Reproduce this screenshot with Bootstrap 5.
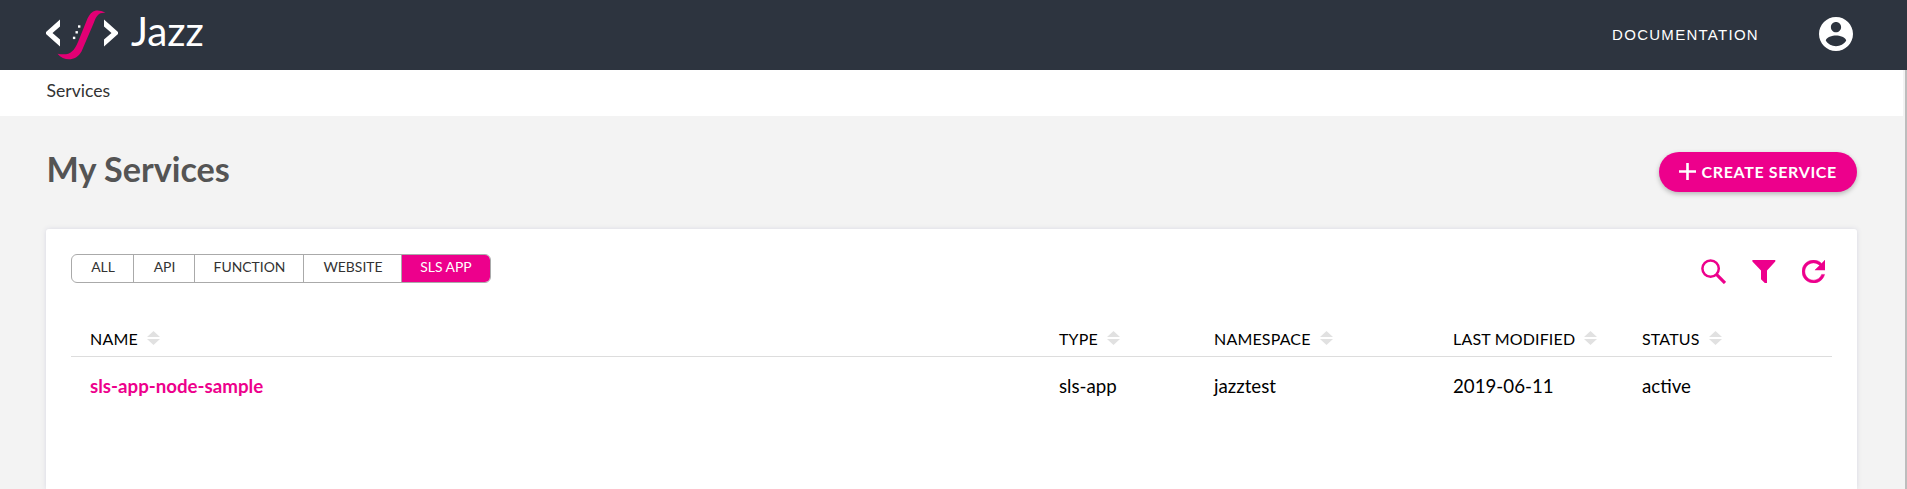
<!DOCTYPE html>
<html lang="en">
<head>
<meta charset="utf-8">
<meta name="viewport" content="width=device-width, initial-scale=1">
<title>Jazz - My Services</title>
<link rel="stylesheet" href="https://cdn.jsdelivr.net/npm/bootstrap@5.3.0/dist/css/bootstrap.min.css">
<style>
  :root { --pink: #ed008c; }
  body { font-family: Lato, sans-serif; background: #f3f3f3; color: #000; height: 489px; overflow: hidden; }
  .topbar { height: 70px; background: #2d343f; padding: 0 54px 0 46px; }
  .logo-text { font-size: 40.400px; line-height: 1; color: #fff; margin-left: 13px; margin-top: -8px; }
  .doc-link { font: 15px/1 "Liberation Sans", sans-serif; letter-spacing: 1.280px; color: #fff; margin: -2px 60px 0 0; }
  .page { height: 419px; border-right: 2px solid #bdbdbd; }
  .crumbs { height: 46px; margin-right: 2px; padding: 9px 0 0 46.500px; font-size: 17.600px; line-height: 24px; color: #333; }
  .content-area { padding: 36px 48px 0 46px; height: 373px; }
  .page-title { font-size: 34.200px; font-weight: 700; line-height: 34px; color: #545454; height: 77px; margin: 0; padding-left: .5px; }
  .create-btn { height: 40px; width: 198px; border-radius: 20px; background: var(--pink) !important; color: #fff !important; font-size: 16px; font-weight: 700; line-height: 40px; letter-spacing: .65px; padding: 0 0 0 19px; white-space: nowrap; box-shadow: 0 2px 5px rgba(0,0,0,.26); }
  .create-btn svg { margin: -2px 5.500px 0 0; }
  .panel { background: #fff; border-radius: 3px 3px 0 0; height: 260px; padding: 25px 25px 0; box-shadow: 0 0 5px rgba(90,90,150,.16); }
  .tabs { height: 29px; border: 1px solid #aaa; border-radius: 6px; overflow: hidden; font-size: 13.900px; line-height: 24px; color: #333; text-align: center; }
  .tabs > div { border-right: 1px solid #aaa; padding-left: 1px; }
  .tabs > div:last-child { border: 0; padding-left: 0; }
  .tabs .on { background: var(--pink); color: #fff; margin: -1px 0; padding-top: 1px; border-radius: 0 5px 5px 0; }
  .tools { padding: 5px 7px 0 0; color: var(--pink); }
  .services { display: grid; grid-template-columns: 969px 155px 239px 189px 1fr; }
  .head-row { margin-top: 44px; height: 30px; padding-left: 19px; border-bottom: 1px solid #ddd; font-size: 16px; line-height: 24px; letter-spacing: .17px; }
  .head-row > div { display: flex; align-items: flex-start; }
  .head-row svg { margin: 4px 0 0 9px; fill: #e1e1e1; }
  .body-row { padding: 17px 0 0 19px; font-size: 18.700px; line-height: 24px; }
  .svc-name { color: var(--pink); font-weight: 700; }
</style>
</head>
<body>
<svg class="d-none"><symbol id="sort" viewBox="0 0 13 14"><path d="M6.500 0L13 6H0zM0 8h13l-6.500 6z"/></symbol></svg>
<header class="topbar d-flex align-items-center">
  <svg width="72" height="70" viewBox="46 0 72 70">
    <path d="M60 19.500v7L52.500 33l7.500 6.500v7L46 34v-2zM104 19.500L118 32v2l-14 12.500v-7l7.500-6.500-7.500-6.500z" fill="#fff"/>
    <path d="M105.500 12.700C97 8.500 91.500 10 87.500 18.500L78 42C73.500 52.500 69 56 57.500 53.700 64 61.500 76 61.500 81.500 51.500L93.500 23.500C96.500 15 99 12.200 105.500 12.700z" fill="#e20074"/>
    <g fill="#fff"><rect x="78" y="25.300" width="2.400" height="2.400"/><rect x="75.500" y="31.100" width="2.400" height="2.400"/><rect x="72.900" y="36.700" width="2.400" height="2.400"/></g>
  </svg>
  <span class="logo-text">Jazz</span>
  <span class="doc-link ms-auto">DOCUMENTATION</span>
  <svg width="34" height="34" viewBox="2 2 20 20" style="margin-top:-2px" fill="#fff"><path d="M12 2C6.480 2 2 6.480 2 12s4.480 10 10 10 10-4.480 10-10S17.520 2 12 2zm0 3c1.660 0 3 1.340 3 3s-1.340 3-3 3-3-1.340-3-3 1.340-3 3-3zm0 14.200c-2.500 0-4.710-1.280-6-3.220.03-1.990 4-3.080 6-3.080 1.990 0 5.970 1.090 6 3.080-1.290 1.940-3.500 3.220-6 3.220z"/></svg>
</header>
<div class="page">
  <nav class="crumbs bg-white">Services</nav>
  <main class="content-area">
    <div class="d-flex justify-content-between align-items-start">
      <h1 class="page-title">My Services</h1>
      <button class="create-btn btn d-flex align-items-center">
        <svg width="17" height="17" viewBox="0 0 17 17"><path d="M8.500 0v17M0 8.500h17" stroke="#fff" stroke-width="2.600"/></svg>
        <span>CREATE SERVICE</span>
      </button>
    </div>
    <section class="panel">
      <div class="d-flex justify-content-between align-items-start" style="height:29px">
        <div class="tabs d-flex">
          <div style="width:62px">ALL</div><div style="width:61px">API</div><div style="width:109px">FUNCTION</div><div style="width:98px">WEBSITE</div><div class="on" style="width:88px">SLS APP</div>
        </div>
        <div class="tools d-flex">
          <svg width="25" height="25" viewBox="0 0 25 25" style="margin-right:26px"><circle cx="9.600" cy="9.600" r="8.200" fill="none" stroke="currentColor" stroke-width="2.500"/><path d="M15.200 15.200l8.800 8.800" stroke="currentColor" stroke-width="3.200"/></svg>
          <svg width="24" height="24" viewBox="0 0 24 24" style="margin:1px 26px 0 0" fill="currentColor"><path d="M.4 0h22.900v1.600L15 10.500V23h-2.200L9 19.200v-8.700L.4 1.600z"/></svg>
          <svg width="23" height="23" viewBox="4 4 16 16" style="margin-top:1px" fill="currentColor" stroke="currentColor" stroke-width=".3"><path d="M17.650 6.350C16.200 4.900 14.210 4 12 4c-4.420 0-7.990 3.580-7.990 8s3.570 8 7.990 8c3.730 0 6.840-2.550 7.730-6h-2.080c-.82 2.330-3.040 4-5.650 4-3.310 0-6-2.690-6-6s2.690-6 6-6c1.660 0 3.140.69 4.220 1.780L13 11h7V4l-2.350 2.350z"/></svg>
        </div>
      </div>
      <div class="services head-row">
        <div>NAME<svg width="13" height="14"><use href="#sort"/></svg></div>
        <div>TYPE<svg width="13" height="14"><use href="#sort"/></svg></div>
        <div>NAMESPACE<svg width="13" height="14"><use href="#sort"/></svg></div>
        <div>LAST MODIFIED<svg width="13" height="14"><use href="#sort"/></svg></div>
        <div>STATUS<svg width="13" height="14"><use href="#sort"/></svg></div>
      </div>
      <div class="services body-row">
        <div class="svc-name">sls-app-node-sample</div><div>sls-app</div><div>jazztest</div><div>2019-06-11</div><div>active</div>
      </div>
    </section>
  </main>
</div>
<script src="https://cdn.jsdelivr.net/npm/bootstrap@5.3.0/dist/js/bootstrap.bundle.min.js"></script>
</body>
</html>
